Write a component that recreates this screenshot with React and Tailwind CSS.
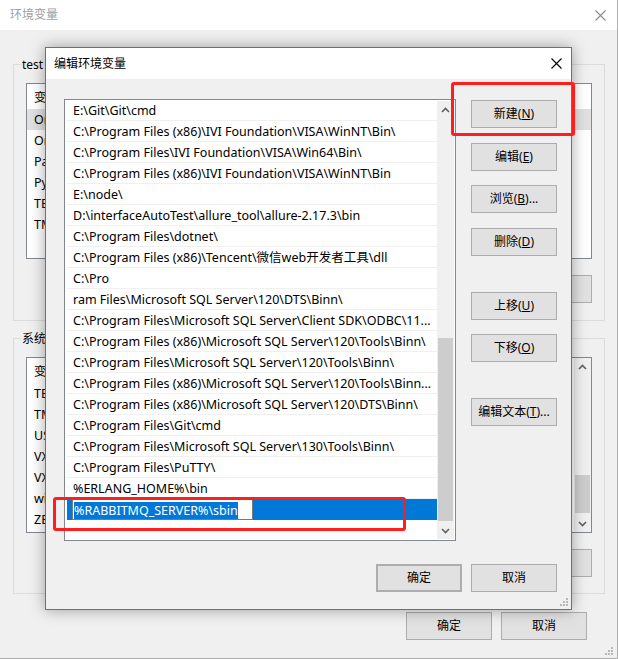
import React from "react";

const FONT = "font-['Noto_Sans','Noto_Sans_CJK_SC',sans-serif]";

function CloseX({ color = "#000", size = 11 }) {
  return (
    <svg width={size} height={size} viewBox="0 0 11 11">
      <path d="M0.5 0.5 L10.5 10.5 M10.5 0.5 L0.5 10.5" stroke={color} strokeWidth="1.1" fill="none" />
    </svg>
  );
}

function Chevron({ up }) {
  return (
    <svg width="9" height="6" viewBox="0 0 9 6">
      <path d={up ? "M1 5 L4.5 1.5 L8 5" : "M1 1 L4.5 4.5 L8 1"} stroke="#606060" strokeWidth="1.6" fill="none" />
    </svg>
  );
}

function Grip() {
  return (
    <svg width="10" height="10" viewBox="0 0 10 10">
      {[[8, 2], [8, 5], [8, 8], [5, 5], [5, 8], [2, 8]].map(([x, y], i) => (
        <rect key={i} x={x - 1} y={y - 1} width="2" height="2" fill="#b8b8b8" />
      ))}
    </svg>
  );
}

function Btn({ children, className = "" }) {
  return (
    <div
      className={`flex h-[28px] w-[86px] shrink-0 items-center justify-center border border-[#adadad] bg-[#e1e1e1] text-[12px] text-black ${className}`}
    >
      {children}
    </div>
  );
}

const paths = [
  "E:\\Git\\Git\\cmd",
  "C:\\Program Files (x86)\\IVI Foundation\\VISA\\WinNT\\Bin\\",
  "C:\\Program Files\\IVI Foundation\\VISA\\Win64\\Bin\\",
  "C:\\Program Files (x86)\\IVI Foundation\\VISA\\WinNT\\Bin",
  "E:\\node\\",
  "D:\\interfaceAutoTest\\allure_tool\\allure-2.17.3\\bin",
  "C:\\Program Files\\dotnet\\",
  "C:\\Program Files (x86)\\Tencent\\微信web开发者工具\\dll",
  "C:\\Pro",
  "ram Files\\Microsoft SQL Server\\120\\DTS\\Binn\\",
  "C:\\Program Files\\Microsoft SQL Server\\Client SDK\\ODBC\\11...",
  "C:\\Program Files (x86)\\Microsoft SQL Server\\120\\Tools\\Binn\\",
  "C:\\Program Files\\Microsoft SQL Server\\120\\Tools\\Binn\\",
  "C:\\Program Files (x86)\\Microsoft SQL Server\\120\\Tools\\Binn...",
  "C:\\Program Files (x86)\\Microsoft SQL Server\\120\\DTS\\Binn\\",
  "C:\\Program Files\\Git\\cmd",
  "C:\\Program Files\\Microsoft SQL Server\\130\\Tools\\Binn\\",
  "C:\\Program Files\\PuTTY\\",
  "%ERLANG_HOME%\\bin",
];

const userVars = ["OneDrive", "OneDriveConsumer", "Path", "PyCharm", "TEMP", "TMP"];
const sysVars = ["TEMP", "TMP", "USERNAME", "VXIPNPPATH", "VXIPNPPATH64", "windir", "ZES_ENABLE_SYSMAN"];

function VarList({ rows, selected, scroll }) {
  return (
    <div className="flex h-[176px] w-[566px] border border-[#828790] bg-white">
      <div className="flex-1">
        <div className="flex h-[25px] items-center pt-[3px] text-[12.5px]">
          <div className="w-[160px] pl-[7px]">变量</div>
          <div className="pl-[7px]">值</div>
        </div>
        {rows.map((k, i) => (
          <div
            key={i}
            className={`flex h-[21px] items-center pt-[1px] text-[12.5px] ${selected === i ? "bg-[#e0e0e0]" : ""}`}
          >
            <div className="w-[160px] pl-[7px]">{k}</div>
          </div>
        ))}
      </div>
      {scroll && (
        <div className="flex w-[17px] flex-col items-center bg-[#f0f0f0]">
          <div className="flex h-[17px] items-center"><Chevron up /></div>
          <div className="flex-1 w-full px-[1px] pt-[100px] pb-[2px]">
            <div className="h-[38px] w-full bg-[#cdcdcd]" />
          </div>
          <div className="flex h-[17px] items-center"><Chevron /></div>
        </div>
      )}
    </div>
  );
}

function Group({ label, children }) {
  return (
    <div className="relative w-[592px] border border-[#dcdcdc] px-[12px] pt-[18px]">
      <span className="absolute -top-[9px] left-[7px] bg-[#f0f0f0] px-[1px] text-[12px] text-black">{label}</span>
      {children}
    </div>
  );
}

export default function App() {
  return (
    <div className={`relative h-[659px] w-[618px] overflow-hidden ${FONT}`}>
      {/* Background window */}
      <div className="flex h-[659px] w-[618px] flex-col border-r border-b border-[#b0b0b0] bg-[#f0f0f0]">
        <div className="flex h-[30px] shrink-0 items-center justify-between bg-white pl-[10px] pr-[11px]">
          <span className="text-[12px] text-[#a0a0a0]">环境变量</span>
          <CloseX color="#8c8c8c" size={11} />
        </div>
        <div className="px-[13px] pt-[34px]">
          <Group label="test 的用户变量(U)">
            <VarList rows={userVars} selected={0} />
            <div className="mt-[16px] mb-[17px] flex justify-end gap-[9px]">
              <Btn><span>新建(<u>N</u>)...</span></Btn>
              <Btn><span>编辑(<u>E</u>)...</span></Btn>
              <Btn><span>删除(<u>D</u>)</span></Btn>
            </div>
          </Group>
          <div className="h-[17px]" />
          <Group label="系统变量(S)">
            <VarList rows={sysVars} scroll />
            <div className="mt-[16px] mb-[16px] flex justify-end gap-[9px]">
              <Btn><span>新建(<u>W</u>)...</span></Btn>
              <Btn><span>编辑(<u>I</u>)...</span></Btn>
              <Btn><span>删除(<u>L</u>)</span></Btn>
            </div>
          </Group>
          <div className="mt-[18px] flex justify-end gap-[9px] pr-[17px]">
            <Btn>确定</Btn>
            <Btn>取消</Btn>
          </div>
        </div>
        <div className="absolute bottom-[3px] right-[4px]"><Grip /></div>
      </div>

      {/* Edit dialog */}
      <div className="absolute left-[45px] top-[47px] flex h-[563px] w-[527px] flex-col border border-[#707070] bg-[#f0f0f0] shadow-[0_0_14px_rgba(0,0,0,0.35)]">
        <div className="flex h-[31px] shrink-0 items-center justify-between bg-white pl-[8px] pr-[9px]">
          <span className="text-[12px] text-black">编辑环境变量</span>
          <CloseX color="#000" size={11} />
        </div>
        <div className="flex pl-[18px] pt-[20px]">
          <div className="flex h-[442px] w-[392px] border border-[#828790] bg-white pl-[1px] pr-[1px]">
            <div className="flex-1 pl-[1px]">
              {paths.map((p, i) => (
                <div
                  key={i}
                  className="flex h-[21px] items-center overflow-hidden whitespace-nowrap border-b border-[#f0f0f0] pl-[6px] pt-[3px] text-[12.5px] text-black"
                >
                  {p}
                </div>
              ))}
              <div className="flex h-[21px] items-center bg-[#0078d7] pl-[5px]">
                <div className="flex h-[21px] w-[181px] items-center border border-[#7a7a7a] bg-white pl-[1px] pt-[1px]">
                  <span className="bg-[#0078d7] text-[12.5px] leading-[17px] text-white">%RABBITMQ_SERVER%\sbin</span>
                </div>
              </div>
            </div>
            <div className="my-[1px] flex w-[17px] flex-col items-center bg-[#f0f0f0]">
              <div className="flex h-[17px] items-center"><Chevron up /></div>
              <div className="w-full flex-1 px-[1px] pt-[220px]">
                <div className="h-[183px] w-full bg-[#cdcdcd]" />
              </div>
              <div className="flex h-[17px] items-center"><Chevron /></div>
            </div>
          </div>
          <div className="ml-[15px] flex flex-col pt-[1px]">
            <Btn><span>新建(<u>N</u>)</span></Btn>
            <Btn className="mt-[15px]"><span>编辑(<u>E</u>)</span></Btn>
            <Btn className="mt-[14px]"><span>浏览(<u>B</u>)...</span></Btn>
            <Btn className="mt-[15px]"><span>删除(<u>D</u>)</span></Btn>
            <Btn className="mt-[36px]"><span>上移(<u>U</u>)</span></Btn>
            <Btn className="mt-[14px]"><span>下移(<u>O</u>)</span></Btn>
            <Btn className="mt-[36px]"><span>编辑文本(<u>T</u>)...</span></Btn>
          </div>
        </div>
        <div className="mt-[23px] flex justify-end gap-[9px] pr-[14px]">
          <Btn className="border-2 border-[#0078d7]">确定</Btn>
          <Btn>取消</Btn>
        </div>
        <div className="absolute bottom-[2px] right-[2px]"><Grip /></div>
      </div>

      {/* Red annotation boxes */}
      <div className="absolute left-[451px] top-[82px] h-[54px] w-[124px] rounded-[3px] border-[3px] border-[#ff1e1e]" />
      <div className="absolute left-[53px] top-[497px] h-[34px] w-[353px] rounded-[3px] border-[3px] border-[#ff1e1e]" />
    </div>
  );
}
